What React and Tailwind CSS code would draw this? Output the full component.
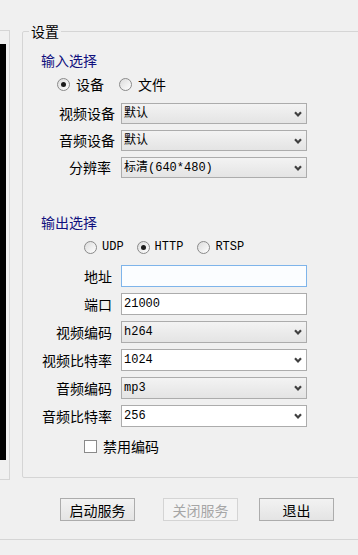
import React from "react";

const inputRows = [
  { label: "视频设备", value: "默认", pr: "pr-0" },
  { label: "音频设备", value: "默认", pr: "pr-0" },
  { label: "分辨率", value: "标清(640*480)", pr: "pr-[4px]" },
];

const outputRows = [
  { label: "地址", type: "focus", value: "" },
  { label: "端口", type: "edit", value: "21000" },
  { label: "视频编码", type: "list", value: "h264" },
  { label: "视频比特率", type: "combo", value: "1024" },
  { label: "音频编码", type: "list", value: "mp3" },
  { label: "音频比特率", type: "combo", value: "256" },
];

function Chevron() {
  return (
    <svg width="8" height="6" viewBox="0 0 8 6" className="shrink-0">
      <path d="M1 1.2 L4 4.4 L7 1.2" fill="none" stroke="#404040" strokeWidth="2.2" />
    </svg>
  );
}

function Field({ type, value }) {
  const text = "flex-1 text-[12px] leading-[20px] font-['Liberation_Mono','Noto_Sans_CJK_SC',monospace] text-black whitespace-nowrap";

  if (type === "focus") {
    return <div className="h-full w-full border border-[#7eb4ea] bg-[#fbfdff]" />;
  }
  if (type === "edit") {
    return (
      <div className="h-full w-full flex items-center pl-[2px] border border-[#acacac] bg-white">
        <span className={text}>{value}</span>
      </div>
    );
  }
  if (type === "combo") {
    return (
      <div className="h-full w-full flex items-center pl-[2px] pr-[4px] border border-[#acacac] bg-white">
        <span className={text}>{value}</span>
        <Chevron />
      </div>
    );
  }
  // dropdown list
  return (
    <div className="h-full w-full flex items-center pl-[2px] pr-[4px] border border-[#acacac] bg-gradient-to-b from-[#f3f3f3] to-[#e4e4e4]">
      <span className={text}>{value}</span>
      <Chevron />
    </div>
  );
}

function Radio({ checked }) {
  return (
    <div className="w-[13px] h-[13px] shrink-0 rounded-full border border-[#8a8a8a] bg-gradient-to-br from-[#dcdcdc] to-white flex items-center justify-center">
      {checked && <div className="w-[5px] h-[5px] rounded-full bg-[#1c1c1c]" />}
    </div>
  );
}

function Button({ label, disabled, className }) {
  return (
    <div
      className={`w-[75px] h-[23px] flex items-center justify-center text-[14px] leading-[20px] ${
        disabled
          ? "border border-[#d4d4d4] bg-[#f4f4f4] text-[#a6a6a6]"
          : "border border-[#acacac] bg-gradient-to-b from-[#f2f2f2] to-[#e4e4e4] text-black"
      } ${className}`}
    >
      {label}
    </div>
  );
}

export default function App() {
  return (
    <div className="w-[358px] h-[555px] overflow-hidden bg-[#f0f0f0] flex flex-col font-['Noto_Sans_CJK_SC',sans-serif] text-black">

      {/* TOP */}
      <div className="flex items-start">

        {/* PREVIEW BOX */}
        <div className="mt-[30px] w-[10px] h-[450px] shrink-0 border-t border-r border-b border-[#d5d5d5]">
          <div className="mt-[13px] w-[6px] h-[416px] bg-black" />
        </div>

        {/* SETTINGS GROUP */}
        <fieldset className="ml-[12px] mt-[21px] w-[340px] h-[457px] shrink-0 min-w-0 border border-[#d5d5d5] rounded-[2px]">
          <legend className="ml-[6px] px-[2px] text-[14px] leading-[20px]">设置</legend>

          <p className="mt-[9px] pl-[18px] text-[14px] leading-[20px] text-[#10107e]">输入选择</p>

          <div className="mt-[4px] h-[20px] pl-[34px] flex items-center text-[14px]">
            <Radio checked />
            <span className="ml-[6px]">设备</span>
            <div className="ml-[15px]"><Radio /></div>
            <span className="ml-[6px]">文件</span>
          </div>

          <div className="mt-[9px] grid grid-cols-[92px_186px] gap-x-[6px] gap-y-[6px]">
            {inputRows.map(row => (
              <React.Fragment key={row.label}>
                <p className={`h-[21px] text-right text-[14px] leading-[21px] ${row.pr}`}>{row.label}</p>
                <div className="h-[21px]"><Field type="list" value={row.value} /></div>
              </React.Fragment>
            ))}
          </div>

          <p className="mt-[34px] pl-[18px] text-[14px] leading-[20px] text-[#10107e]">输出选择</p>

          <div className="mt-[5px] h-[20px] pl-[61px] flex items-center text-[12px] font-['Liberation_Mono',monospace]">
            <Radio />
            <span className="ml-[5px]">UDP</span>
            <div className="ml-[13px]"><Radio checked /></div>
            <span className="ml-[5px]">HTTP</span>
            <div className="ml-[14px]"><Radio /></div>
            <span className="ml-[5px]">RTSP</span>
          </div>

          <div className="mt-[8px] grid grid-cols-[89px_186px] gap-x-[9px] gap-y-[6px]">
            {outputRows.map(row => (
              <React.Fragment key={row.label}>
                <p className="h-[22px] text-right text-[14px] leading-[22px]">{row.label}</p>
                <div className="h-[22px]"><Field type={row.type} value={row.value} /></div>
              </React.Fragment>
            ))}
          </div>

          <div className="mt-[9px] h-[20px] pl-[61px] flex items-center text-[14px]">
            <div className="w-[13px] h-[13px] border border-[#8a8a8a] bg-white" />
            <span className="ml-[6px]">禁用编码</span>
          </div>
        </fieldset>
      </div>

      {/* BUTTONS */}
      <div className="mt-[18px] pl-[60px] flex">
        <Button label="启动服务" />
        <Button label="关闭服务" disabled className="ml-[28px]" />
        <Button label="退出" className="ml-[21px]" />
      </div>

      <div className="mt-[18px] border-t border-[#d5d5d5]" />
    </div>
  );
}
